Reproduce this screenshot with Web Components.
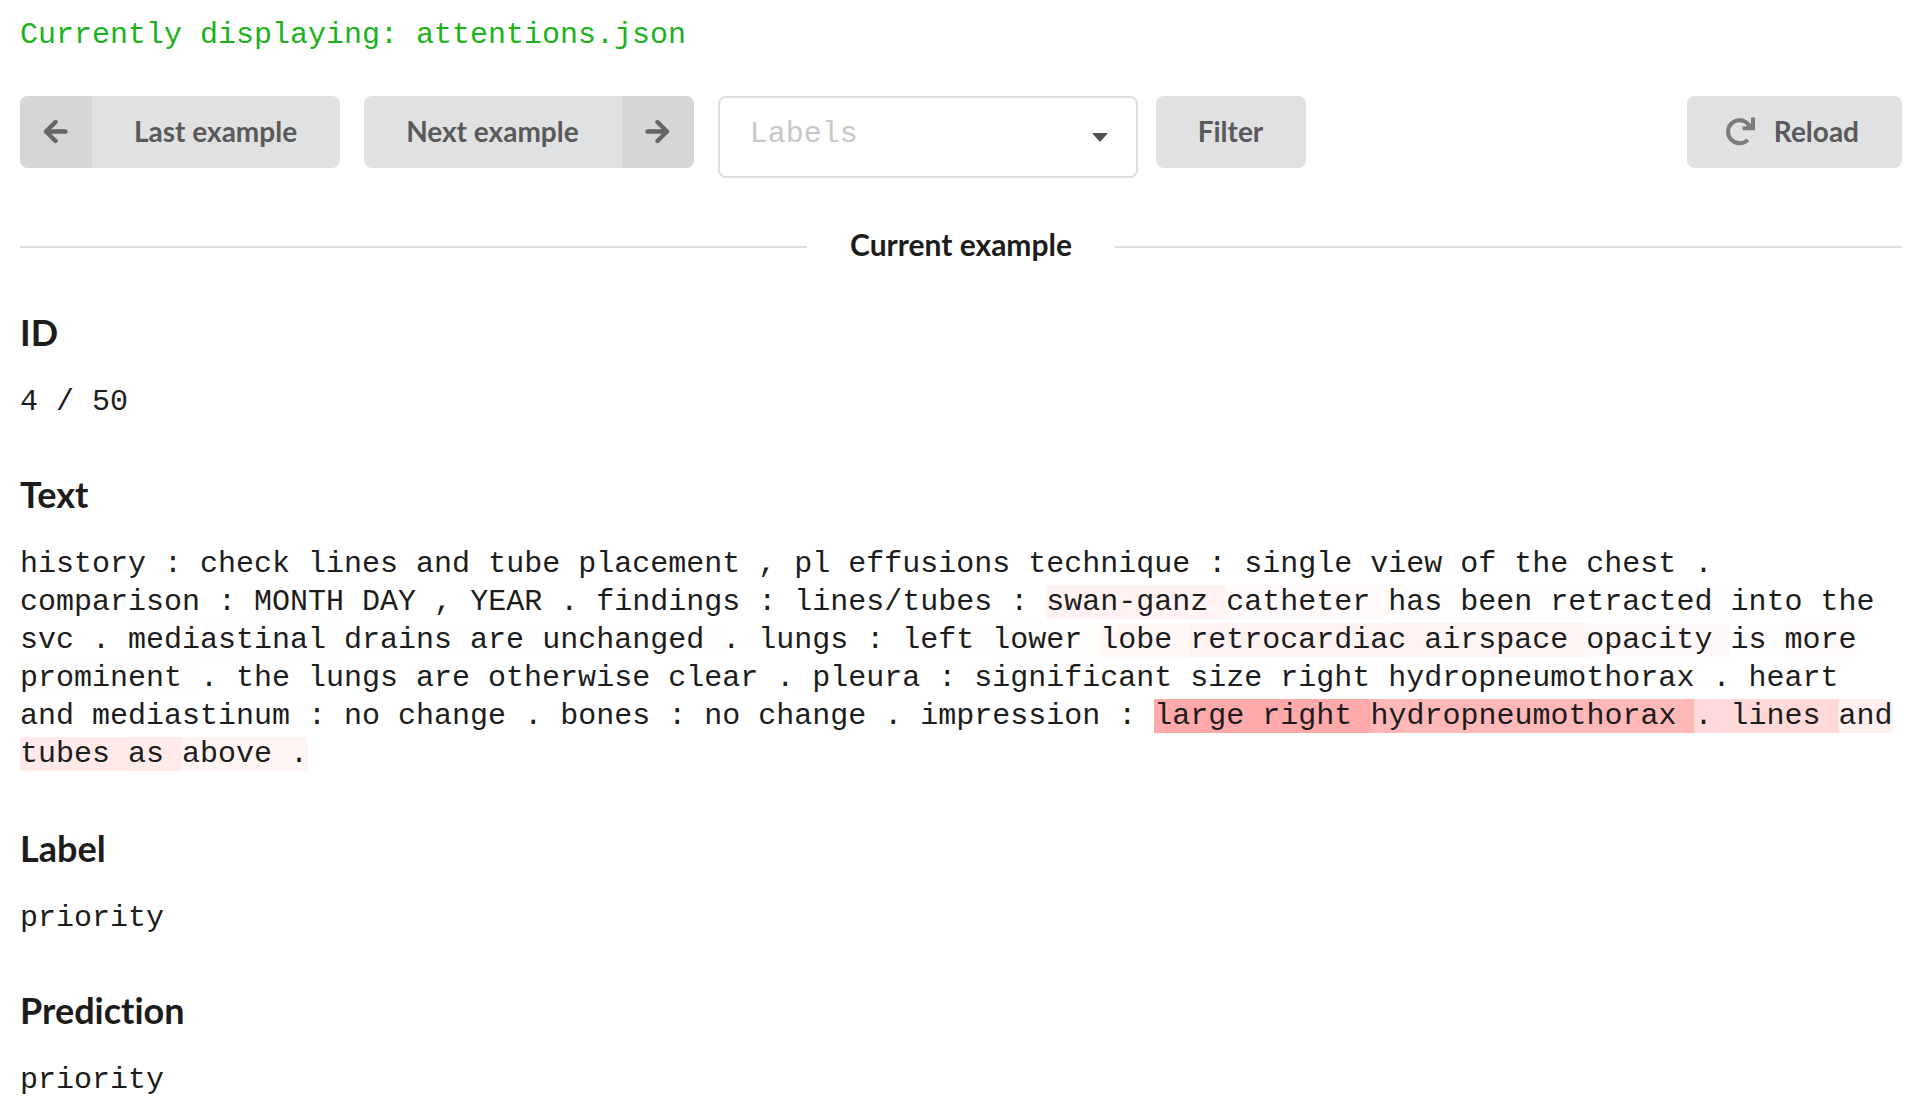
<!DOCTYPE html>
<html lang="en">
<head>
<meta charset="utf-8">
<title>Attention viewer</title>
<style>
  body {
    margin: 0;
    background: #fff;
    color: #1c1c1c;
    font: 30px/38px "Liberation Mono", "Courier New", monospace;
    font-variant-ligatures: none;
  }
</style>
</head>
<body>
<attention-app></attention-app>

<template id="app-template">
  <style>
    :host { display: flex; flex-direction: column; padding: 16px 20px; }
    .status { margin: 0; color: #1cb21c; }
    .toolbar { display: flex; align-items: flex-start; gap: 24px; margin-top: 42px; }
    .filter { display: flex; align-items: flex-start; gap: 18px; }
    .end { margin-left: auto; }
    section-divider { margin-top: 47px; }
    main { display: flex; flex-direction: column; gap: 50px; margin-top: 40px; }
  </style>
  <p class="status">Currently displaying: attentions.json</p>
  <div class="toolbar">
    <tool-button icon="left">Last example</tool-button>
    <tool-button icon="right">Next example</tool-button>
    <div class="filter">
      <label-select></label-select>
      <tool-button>Filter</tool-button>
    </div>
    <tool-button class="end" icon="reload">Reload</tool-button>
  </div>
  <section-divider>Current example</section-divider>
  <main>
    <example-field name="ID">4 / 50</example-field>
    <example-field name="Text"><attention-text></attention-text></example-field>
    <example-field name="Label">priority</example-field>
    <example-field name="Prediction">priority</example-field>
  </main>
</template>

<template id="button-template">
  <style>
    :host { display: block; }
    button {
      display: flex; align-items: center; height: 72px; padding: 0;
      border: 0; border-radius: 8px; overflow: hidden; cursor: pointer;
      background: #e0e1e2; color: #5a5a5a;
      font: bold 28px/28px Lato, sans-serif;
      font-variant-ligatures: none;
    }
    button:hover { background: #cacbcd; }
    .text { padding: 0 43px 2px 42px; white-space: nowrap; }
    .icon { display: flex; align-items: center; justify-content: center; }
    .icon:empty { display: none; }
    svg { display: block; fill: none; stroke: #666; }
    :host([icon="left"]) .icon, :host([icon="right"]) .icon {
      width: 72px; height: 72px; background: #d5d6d7;
    }
    :host([icon="right"]) .icon { order: 1; }
    :host([icon="reload"]) .icon { padding-left: 37px; }
    :host([icon="reload"]) .text { padding-left: 17px; }
    :host([icon="reload"]) svg { stroke: #7b7c7c; }
  </style>
  <button type="button"><span class="icon"></span><span class="text"><slot></slot></span></button>
</template>

<template id="select-template">
  <style>
    :host { display: grid; width: 420px; }
    select, svg { grid-area: 1 / 1; }
    select {
      appearance: none; box-sizing: border-box; width: 100%; height: 82px; margin: 0;
      padding: 17px 64px 23px 30px; border: 2px solid #dededf; border-radius: 8px;
      background: #fff; color: #c7c7c7; font: inherit; cursor: pointer;
    }
    svg { justify-self: end; align-self: center; margin-right: 30px; pointer-events: none; }
  </style>
  <select aria-label="Labels"><option>Labels</option></select>
  <svg width="16" height="10" viewBox="0 0 16 10"><path d="M1.4 1h13.2c.7 0 .9.7.5 1.1L8.7 9.2c-.4.4-1 .4-1.4 0L.9 2.1C.5 1.7.7 1 1.4 1z" fill="#505050"/></svg>
</template>

<template id="divider-template">
  <style>
    :host { display: flex; align-items: center; gap: 43px; }
    :host::before, :host::after { content: ""; flex: 1; height: 2px; background: #dfdfe0; }
    h2 { margin: 0; padding-bottom: 6px; font: bold 30px/38px Lato, sans-serif; }
  </style>
  <h2><slot></slot></h2>
</template>

<template id="field-template">
  <style>
    :host { display: flex; flex-direction: column; gap: 28px; }
    h3 { margin: 0; font: bold 36px/46px Lato, sans-serif; font-variant-ligatures: none; }
  </style>
  <h3></h3>
  <div><slot></slot></div>
</template>

<template id="text-template">
  <style>
    :host { display: block; padding-bottom: 2px; }
  </style>
</template>

<script>
  const ICONS = {
    left: '<svg width="26" height="26" viewBox="0 0 26 26" stroke-width="4.4" stroke-linecap="round" stroke-linejoin="round"><path d="M3 12.5H22.5M12.5 3L3 12.5L12.5 22"/></svg>',
    right: '<svg width="26" height="26" viewBox="0 0 26 26" stroke-width="4.4" stroke-linecap="round" stroke-linejoin="round"><path d="M2.5 12.5H22M12.5 3L22 12.5L12.5 22"/></svg>',
    reload: '<svg width="33" height="30" viewBox="0 0 33 30" stroke-width="4"><path d="M23.8 22.8A11.500 11.500 0 1 1 24.500 7.500L27 10.500M29 .500V11.200H18.500"/></svg>'
  };

  class TemplateElement extends HTMLElement {
    constructor() {
      super();
      const source = document.getElementById(this.constructor.template);
      this.attachShadow({ mode: "open" }).append(source.content.cloneNode(true));
    }
  }

  class ToolButton extends TemplateElement {
    static template = "button-template";
    connectedCallback() {
      this.shadowRoot.querySelector(".icon").innerHTML = ICONS[this.getAttribute("icon")] || "";
    }
  }

  class LabelSelect extends TemplateElement {
    static template = "select-template";
  }

  class SectionDivider extends TemplateElement {
    static template = "divider-template";
  }

  class ExampleField extends TemplateElement {
    static template = "field-template";
    connectedCallback() {
      this.shadowRoot.querySelector("h3").textContent = this.getAttribute("name");
    }
  }

  // Runs of words, each with the tint of its attention weight.
  const RUNS = [
    ["history : check lines and tube placement , pl effusions technique : single view of the chest . comparison : MONTH DAY , YEAR . findings : lines/tubes :"],
    ["swan-ganz", "#fff2f2"], ["catheter", "#fffafa"], ["has", "#fffdfc"], ["been retracted", "#fffefe"],
    ["into the svc ."], ["mediastinal", "#fffdfc"], ["drains are", "#fffefe"], ["unchanged", "#fffdfd"],
    [". lungs :"], ["left", "#fffdfd"], ["lower", "#fffdfc"], ["lobe", "#fff6f6"],
    ["retrocardiac", "#fff2f2"], ["airspace", "#fff5f5"], ["opacity", "#fff8f8"],
    ["is", "#fffefe"], ["more", "#fffafa"], ["prominent", "#fffdfb"],
    [". the lungs are otherwise clear . pleura : significant size right hydropneumothorax . heart and mediastinum : no change . bones : no change . impression :"],
    ["large right", "#ffa9aa"], ["hydropneumothorax", "#ffb7b8"], [".", "#ffdadc"],
    ["lines", "#ffd8d8"], ["and", "#fff0ef"], ["tubes", "#ffe9e9"], ["as", "#ffebea"], ["above .", "#fff5f4"]
  ];

  class AttentionText extends TemplateElement {
    static template = "text-template";
    connectedCallback() {
      const words = RUNS.flatMap(([run, tint]) => run.split(" ").map(word => [word, tint]));
      words.forEach(([word, tint], index) => {
        const span = document.createElement("span");
        span.textContent = index < words.length - 1 ? word + " " : word;
        if (tint) span.style.backgroundColor = tint;
        this.shadowRoot.append(span);
      });
    }
  }

  class AttentionApp extends TemplateElement {
    static template = "app-template";
  }

  customElements.define("tool-button", ToolButton);
  customElements.define("label-select", LabelSelect);
  customElements.define("section-divider", SectionDivider);
  customElements.define("example-field", ExampleField);
  customElements.define("attention-text", AttentionText);
  customElements.define("attention-app", AttentionApp);
</script>
</body>
</html>
